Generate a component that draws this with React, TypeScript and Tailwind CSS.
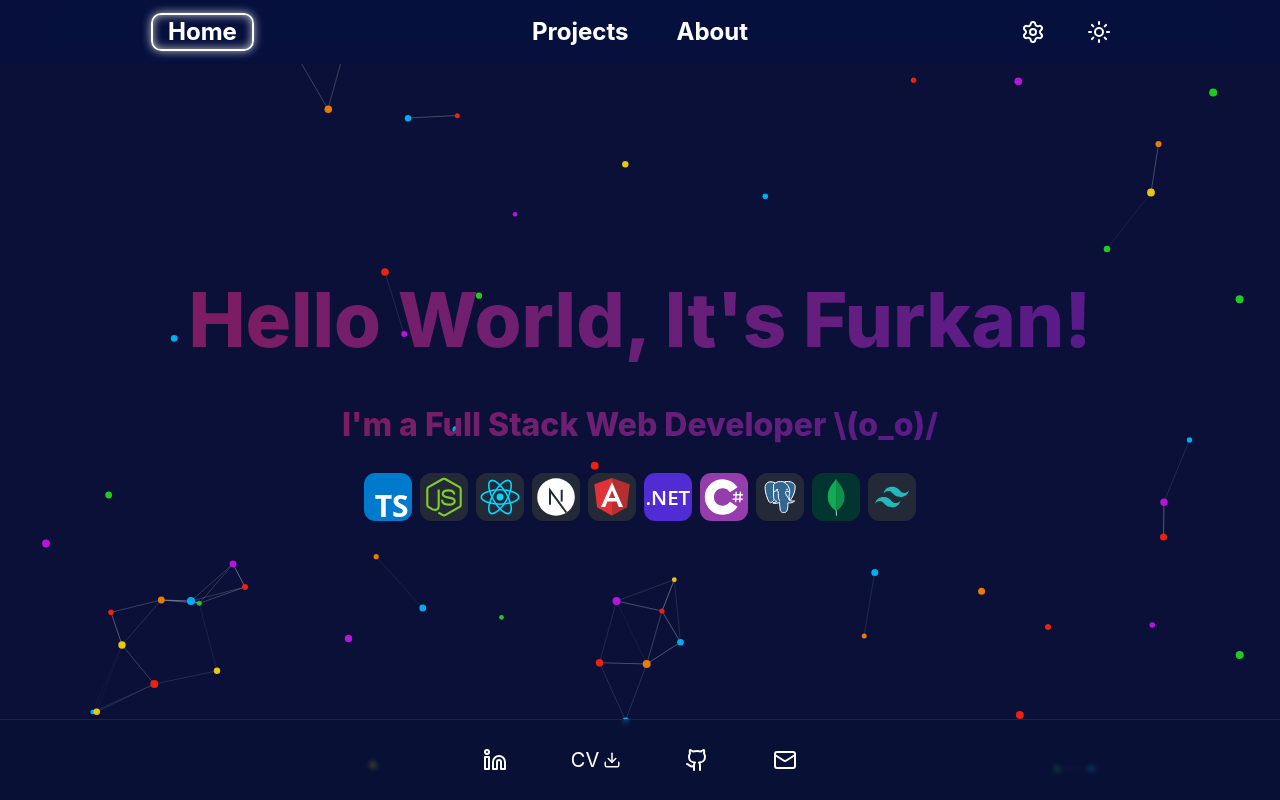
import type { ReactNode } from "react";
import { Download, Github, Linkedin, Mail, Settings, Sun } from "lucide-react";
import { SiTailwindcss } from "react-icons/si";

const RED = "#ee220c";
const ORANGE = "#ea7a06";
const YELLOW = "#ebc70a";
const GREEN = "#1fcb20";
const BLUE = "#00adf0";
const PURPLE = "#b814dc";

type Particle = [x: number, y: number, radius: number, color: string];
type Link = [x1: number, y1: number, x2: number, y2: number, opacity: number];

const particles: Particle[] = [
  [328.3, 109.3, 3.8, ORANGE], [408, 118.3, 3.2, BLUE], [457.3, 115.7, 2.5, RED],
  [625.3, 164.3, 3.2, YELLOW], [515, 214.3, 2.3, PURPLE], [765.3, 196.3, 2.8, BLUE],
  [913.6, 80.3, 2.7, RED], [1018.3, 81.3, 3.9, PURPLE], [1213.2, 92.5, 4, GREEN],
  [1158.5, 144, 3.1, ORANGE], [1151, 192.5, 3.9, YELLOW], [1107, 249, 3.3, GREEN],
  [1239.6, 299.2, 4, GREEN], [385, 272, 3.8, RED], [404.2, 334, 3, PURPLE],
  [479, 295.7, 3.1, GREEN], [174.2, 338.3, 3.4, BLUE], [456, 429.7, 3.6, BLUE],
  [594.7, 465.7, 3.9, RED], [1189.5, 440, 2.7, BLUE], [1164, 502.2, 3.7, PURPLE],
  [1163.5, 537, 3.5, RED], [108.7, 495, 3.4, GREEN], [46, 543.5, 3.9, PURPLE],
  [233, 564, 3.4, PURPLE], [245, 587, 3, RED], [161.3, 600, 3.4, ORANGE],
  [191, 601, 4, BLUE], [199.3, 603.3, 2.5, GREEN], [111, 612.3, 2.8, RED],
  [122, 645, 3.7, YELLOW], [217, 670.8, 3.2, YELLOW], [154.3, 684, 4, RED],
  [92.5, 712, 2.2, BLUE], [96.7, 711.7, 3.3, YELLOW], [376.2, 556.7, 2.6, ORANGE],
  [422.7, 608, 3.4, BLUE], [348.5, 638.5, 3.7, PURPLE], [501.5, 617.3, 2.4, GREEN],
  [674.3, 579.7, 2.4, YELLOW], [616.5, 601, 4, PURPLE], [662, 611, 2.6, RED],
  [680.5, 642.2, 3.3, BLUE], [599.5, 662.7, 3.7, RED], [646.7, 664, 4, ORANGE],
  [625.7, 721, 3.6, BLUE], [874.8, 572.5, 3.5, BLUE], [864.2, 636, 2.5, ORANGE],
  [981.6, 591.2, 3.5, ORANGE], [1048, 627, 3, RED], [1152.3, 625, 2.8, PURPLE],
  [1239.7, 655, 4, GREEN], [1019.8, 715, 4, RED], [373, 765, 4, YELLOW],
  [1057.3, 769, 3.4, GREEN], [1091.5, 768.5, 3.8, BLUE],
];

const links: Link[] = [
  [328, 109, 300.5, 62, 0.2], [328, 109, 341, 62, 0.2], [408, 118, 457, 115.5, 0.24],
  [1158.5, 144, 1151, 192.5, 0.24], [1151, 192.5, 1107, 249, 0.06],
  [385, 272, 404, 334, 0.1], [1189.5, 440, 1164, 502, 0.1],
  [1164, 502, 1163.5, 537, 0.3], [233, 564, 245, 587, 0.36],
  [233, 564, 191, 601, 0.17], [233, 564, 199.3, 603.3, 0.17],
  [245, 587, 191, 601, 0.17], [245, 587, 199.3, 603.3, 0.22],
  [161.3, 600, 191, 601, 0.36], [161.3, 600, 199.3, 603.3, 0.28],
  [191, 601, 199.3, 603.3, 0.38], [161.3, 600, 111, 612.3, 0.2],
  [161.3, 600, 122, 645, 0.13], [111, 612.3, 122, 645, 0.3],
  [122, 645, 154.3, 684, 0.2], [122, 645, 92.5, 712, 0.03],
  [122, 645, 96.7, 711.7, 0.03], [154.3, 684, 217, 670.8, 0.11],
  [154.3, 684, 96.7, 711.7, 0.13], [154.3, 684, 92.5, 712, 0.08],
  [199.3, 603.3, 217, 670.8, 0.07], [376, 556.5, 422.5, 608, 0.07],
  [616.5, 601, 674.3, 579.7, 0.12], [616.5, 601, 662, 611, 0.26],
  [616.5, 601, 599.5, 662.7, 0.1], [616.5, 601, 646.7, 664, 0.05],
  [674.3, 579.7, 662, 611, 0.34], [674.3, 579.7, 680.5, 642.2, 0.11],
  [662, 611, 680.5, 642.2, 0.3], [662, 611, 646.7, 664, 0.2],
  [680.5, 642.2, 646.7, 664, 0.28], [599.5, 662.7, 646.7, 664, 0.26],
  [599.5, 662.7, 625.5, 720.5, 0.12], [646.7, 664, 625.5, 720.5, 0.13],
  [874.7, 572.5, 864, 636, 0.1], [1019.7, 715, 1057.3, 769, 0.1],
  [1057.3, 769, 1091.5, 768.5, 0.3],
];

function ParticleField() {
  return (
    <svg
      className="pointer-events-none absolute inset-0 h-full w-full"
      viewBox="0 0 1280 800"
      preserveAspectRatio="xMidYMid slice"
      aria-hidden="true"
    >
      {links.map(([x1, y1, x2, y2, opacity], i) => (
        <line key={i} x1={x1} y1={y1} x2={x2} y2={y2} stroke="#fff" strokeOpacity={opacity} />
      ))}
      {particles.map(([x, y, r, color], i) => (
        <circle key={i} cx={x} cy={y} r={r} fill={color} />
      ))}
    </svg>
  );
}

function Tile({ name, color, children }: { name: string; color: string; children: ReactNode }) {
  return (
    <svg className="size-12 overflow-visible" viewBox="0 0 48 48" fill="none" role="img" aria-label={name}>
      <rect width="48" height="48" rx="11.25" fill={color} />
      {children}
    </svg>
  );
}

function TechStack() {
  return (
    <div className="flex flex-wrap justify-center gap-2">
      <Tile name="TypeScript" color="#007acc">
        <text x="10.7" y="43.5" fill="#fff" fontFamily="Open Sans, sans-serif" fontWeight="700" fontSize="30">TS</text>
      </Tile>
      <Tile name="Node.js" color="#242938">
        <path
          d="M18.4 39.5l4.400 2.600q1.200.6 2.400 0l14.400-8.200q1.100-.7 1.100-2V16.200q0-1.300-1.100-2L25.200 6q-1.200-.6-2.400 0L8.400 14.200q-1.100.7-1.100 2v15.700q0 1.300 1.100 2l3.800 2.200c3.800 1.700 6.500.4 6.500-3.100V16.500"
          stroke="#83cd29"
          strokeWidth="2.1"
        />
        <path
          d="M34.300 21.500c-.3-3-2.200-4.100-5.900-4.100-3.600 0-5.700 1.300-5.700 3.700 0 5.400 12 1.700 12 6.800 0 2.400-2.200 3.700-6.200 3.700-4.400 0-6.500-1.700-6.500-4.800"
          stroke="#83cd29"
          strokeWidth="2.1"
        />
      </Tile>
      <Tile name="React" color="#242938">
        <circle cx="24" cy="24" r="3.400" fill="#00d8ff" />
        <g stroke="#00d8ff" strokeWidth="1.600">
          <ellipse cx="24" cy="24" rx="18.700" ry="7.200" />
          <ellipse cx="24" cy="24" rx="18.700" ry="7.200" transform="rotate(60 24 24)" />
          <ellipse cx="24" cy="24" rx="18.700" ry="7.200" transform="rotate(120 24 24)" />
        </g>
      </Tile>
      <Tile name="Next.js" color="#242938">
        <circle cx="24" cy="24" r="18.800" fill="#fff" />
        <path d="M18 31.700V17.300L34.300 39.500M29.700 16.700v11.800" stroke="#242938" strokeWidth="2" />
      </Tile>
      <Tile name="Angular" color="#242938">
        <path d="M24 5L6.300 11.300 9 34.300l15 8.400z" fill="#e23237" />
        <path d="M24 5l17.700 6.300L39 34.300l-15 8.400z" fill="#b52e31" />
        <path fillRule="evenodd" d="M24 9.200L13 34h4.200l2.200-5.600h9.200l2.200 5.600H35zM24 17.300l3.200 7.700h-6.400z" fill="#fff" />
      </Tile>
      <Tile name=".NET" color="#512bd4">
        <text x="1.500" y="31.500" fill="#fff" fontFamily="Open Sans, sans-serif" fontWeight="600" fontSize="20.500">.NET</text>
      </Tile>
      <Tile name="C#" color="#953dac">
        <path d="M33.800 16.800a13.300 13.300 0 1 0 0 14.400" stroke="#fff" strokeWidth="9" />
        <path d="M36.200 18.700l-.6 10.600M40.400 18.700l-.6 10.600M32.900 21.800H43M32.600 26.200h10.100" stroke="#fff" strokeWidth="1.400" />
      </Tile>
      <Tile name="PostgreSQL" color="#242938">
        <g fill="#336791" stroke="#fff" strokeWidth="1" strokeLinejoin="round" strokeLinecap="round">
          <path d="M18.500 9.600c-5-2.200-9.800-.2-9.400 6.100.2 3.600 2.100 10.500 4.100 13.200 1.200 1.600 2.700.9 5.300-2.400z" />
          <path d="M27 9.300c5.200-1.900 10.200-.6 12 3 .8 4.900-1.700 10.700-4.800 15.300l-5-2z" />
          <path d="M17.800 11.300C19.500 8.600 26 7.400 29 9.700c4.300 3 5.500 8.300 4.200 12.200-.5 2.300.6 3.600.3 5.600 1.900.6 4 .6 5.100.3-.7 1.700-3.500 2.300-6.700 2.100.1 3.500-.2 6.800-1.300 8.500-1.300 1.900-5.400 1.500-6.200-.8-.7-2.500-.5-5.400-.9-8.300-1.200 1.100-5.600 1.500-6.700.6 1.900-.6 3.400-.7 3.800-1.700-1.700-.2-3-1.500-3-3.600z" />
          <path d="M17.700 19c1.500-1.500 3.600-1.800 4.400-.7.800 3-.9 6.300 1.400 9.200M33.200 19c-1.500-1.200-3.300-1.200-3.700 0-.4 3 3 4.700 3.800 8" fill="none" />
          <path d="M20.700 16.500h1M30.700 16.300h1" />
        </g>
      </Tile>
      <Tile name="MongoDB" color="#023430">
        <path d="M23.600 36.500h1l.4 6.200h-1z" fill="#b5d8c4" />
        <path d="M24 5.500c.8 2.600 2.500 3.700 4.600 6.700 3 4.500 4.500 9.500 3.700 14.500-.7 4.500-4.400 9-8 11.300z" fill="#109149" />
        <path d="M24 5.500c-.7 2.500-2.800 3.900-4.900 6.900-2.900 4.300-4 9.800-3.100 14.500.9 4.400 4.600 8.600 8.300 11.100z" fill="#12ab52" />
      </Tile>
      <Tile name="Tailwind CSS" color="#242938">
        <g transform="translate(7 7)">
          <SiTailwindcss size={34} fill="#22b9bd" />
        </g>
      </Tile>
    </div>
  );
}

export default function App() {
  return (
    <div className="relative flex min-h-screen flex-col overflow-hidden bg-[#0a1037] font-[Inter,sans-serif] text-white">
      <ParticleField />

      <header className="relative grid h-16 grid-cols-[1fr_auto_1fr] items-center bg-[#06103fcc] px-[151px] backdrop-blur-xl">
        <a
          href="#home"
          className="justify-self-start rounded-[10px] border-2 border-white px-[15px] text-2xl leading-[34px] font-bold shadow-[0_0_10px_rgba(255,255,255,0.75),inset_0_0_10px_rgba(255,255,255,0.75)]"
        >
          Home
        </a>
        <nav className="flex gap-12 text-2xl font-bold">
          <a href="#projects">Projects</a>
          <a href="#about">About</a>
        </nav>
        <div className="flex gap-1.5 justify-self-end">
          <button type="button" aria-label="Settings" className="flex h-10 w-15 items-center justify-center">
            <Settings size={24} />
          </button>
          <button type="button" aria-label="Toggle theme" className="flex h-10 w-15 items-center justify-center">
            <Sun size={24} />
          </button>
        </div>
      </header>

      <main className="relative flex flex-1 flex-col items-center justify-center pt-2 text-center">
        <h1 className="bg-linear-to-r from-[#7d1c62] to-[#591a8a] bg-clip-text text-[76px] leading-[96px] font-extrabold text-transparent">
          Hello World, It's Furkan!
        </h1>
        <p className="mt-[38px] bg-linear-to-r from-[#7d1c62] to-[#591a8a] bg-clip-text text-[32px] leading-10 font-extrabold text-transparent">
          I'm a Full Stack Web Developer \(o_o)/
        </p>
        <div className="mt-7">
          <TechStack />
        </div>
      </main>

      <footer className="relative flex h-[81px] items-center justify-center gap-16 border-t border-[#1e2348] bg-[#071134cc] backdrop-blur-[2px]">
        <a href="#linkedin" aria-label="LinkedIn">
          <Linkedin size={24} />
        </a>
        <a href="#cv" className="flex items-center gap-1 text-xl">
          CV
          <Download size={18} />
        </a>
        <a href="#github" aria-label="GitHub">
          <Github size={24} />
        </a>
        <a href="#mail" aria-label="Email">
          <Mail size={24} />
        </a>
      </footer>
    </div>
  );
}
